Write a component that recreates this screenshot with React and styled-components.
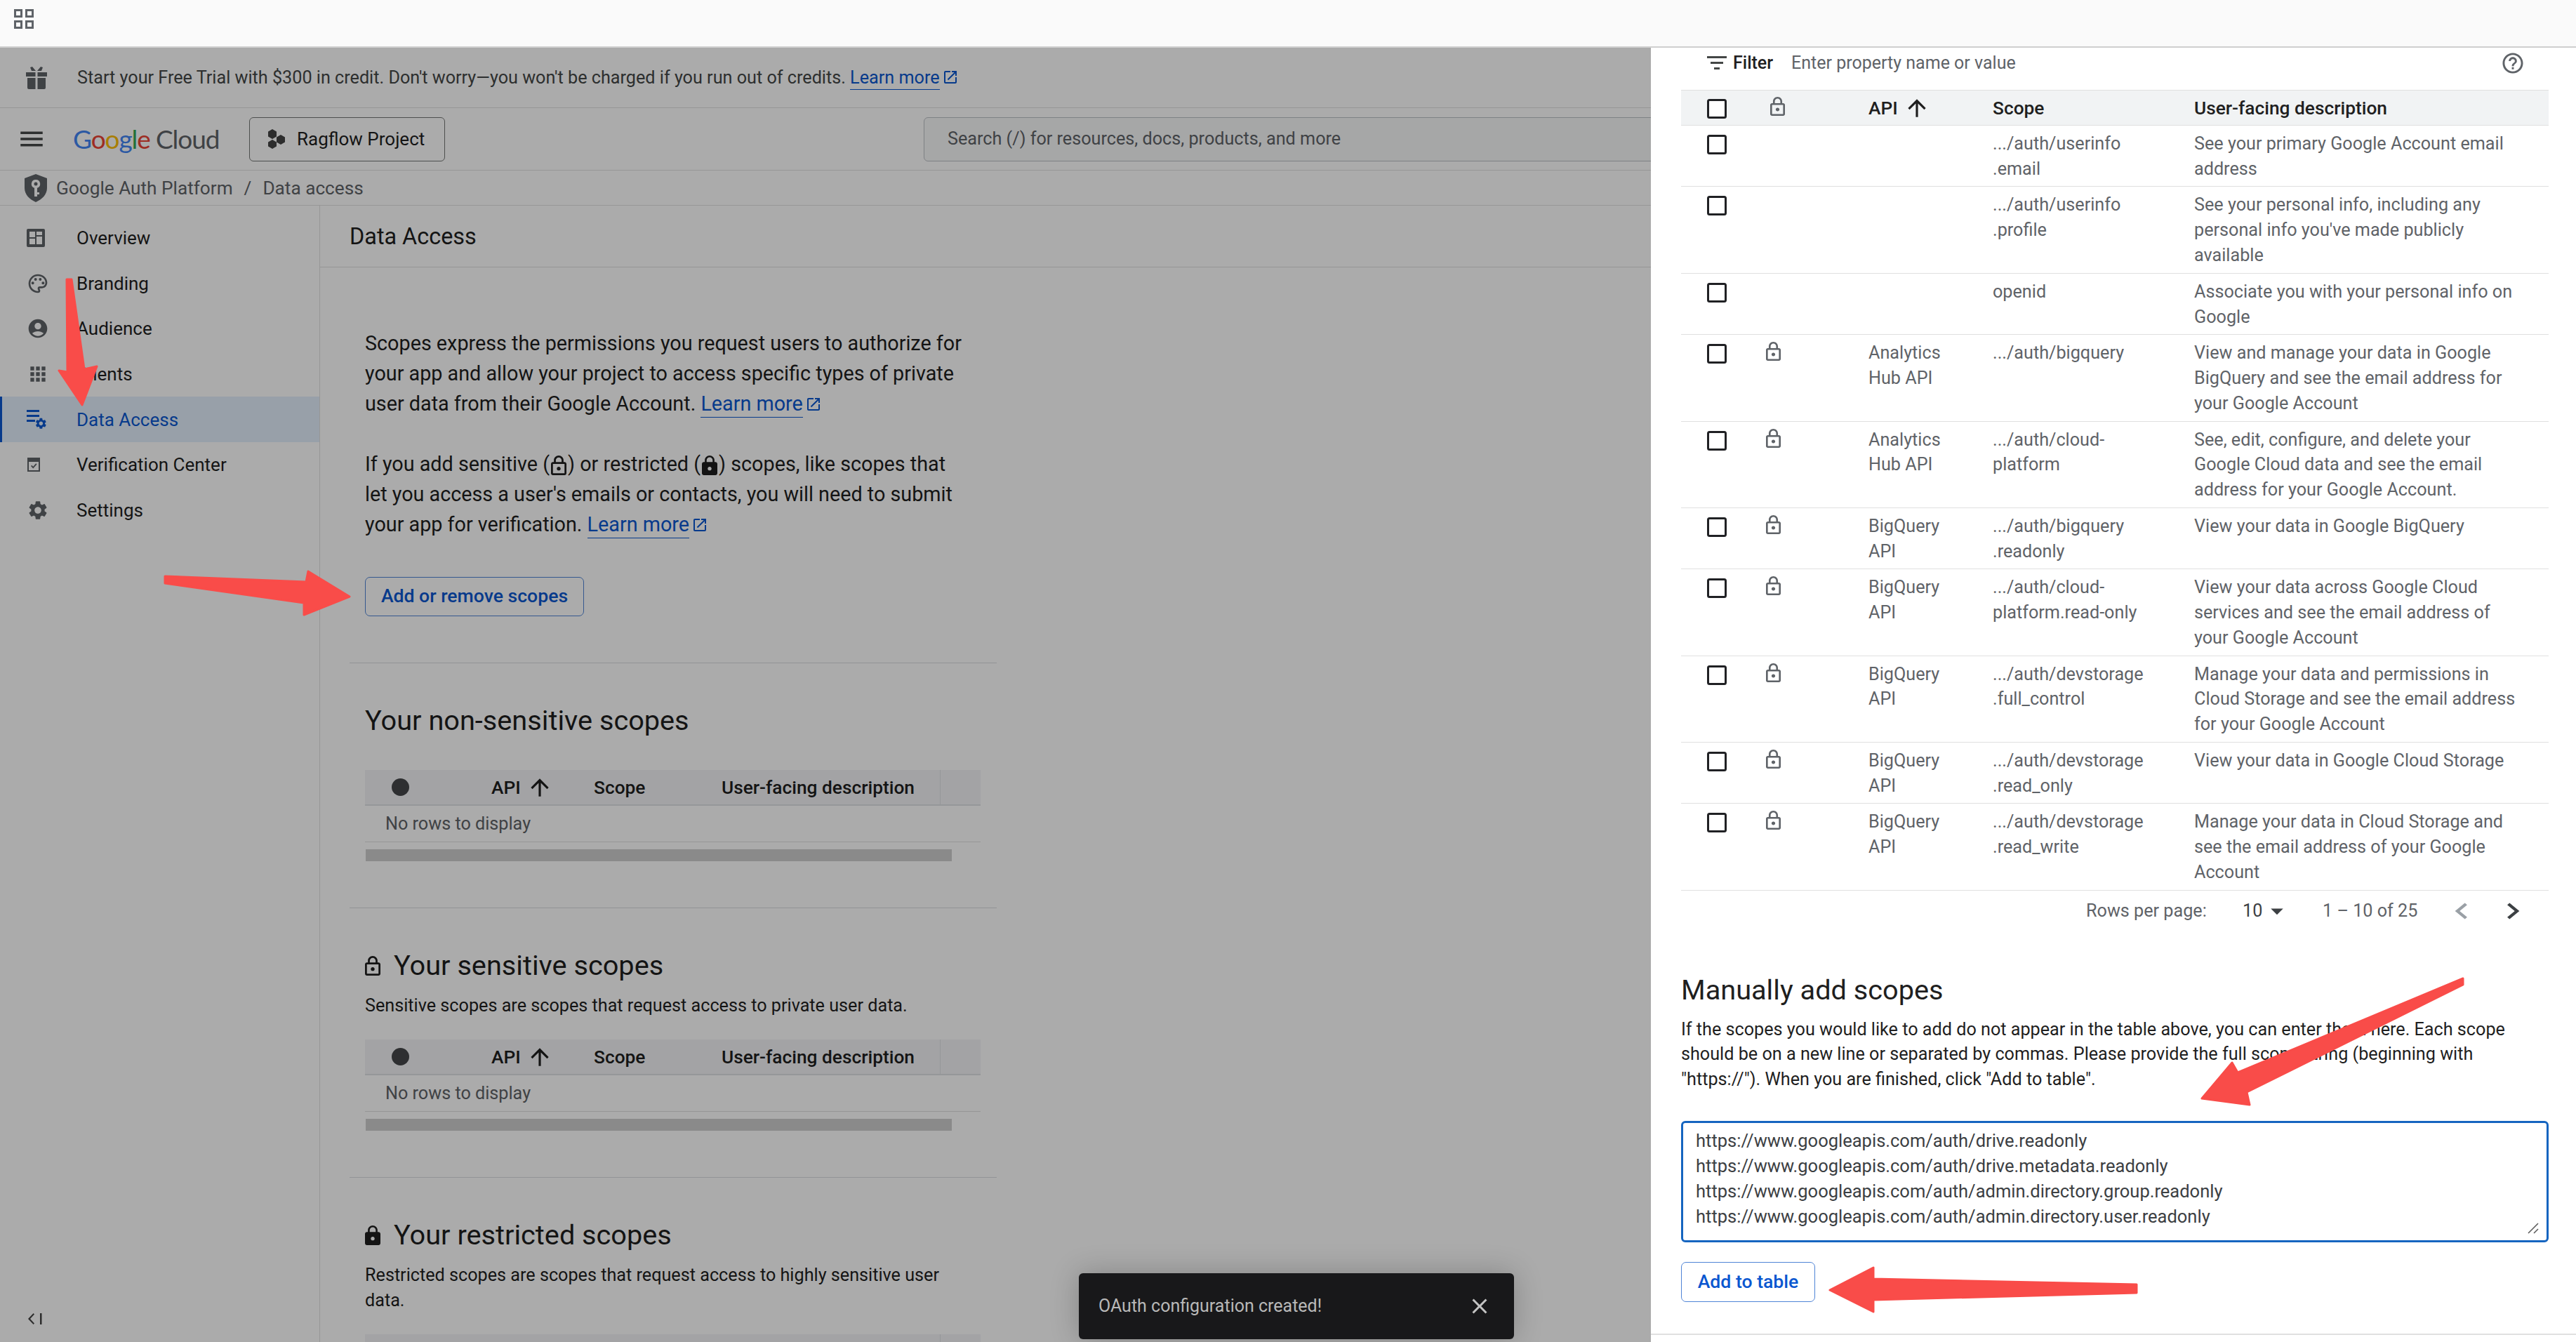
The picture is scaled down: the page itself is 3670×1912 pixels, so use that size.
import React from "react";
import styled, { createGlobalStyle } from "styled-components";

const Global = createGlobalStyle`
  html, body { margin: 0; padding: 0; background: #fff; }
  * { box-sizing: border-box; }
`;

const P = {
  lock: "M18 8h-1V6c0-2.76-2.24-5-5-5S7 3.24 7 6v2H6c-1.1 0-2 .9-2 2v10c0 1.1.9 2 2 2h12c1.1 0 2-.9 2-2V10c0-1.1-.9-2-2-2zM9 6c0-1.66 1.34-3 3-3s3 1.34 3 3v2H9V6zm9 14H6V10h12v10zm-6-3c1.1 0 2-.9 2-2s-.9-2-2-2-2 .9-2 2 .9 2 2 2z",
  lockFill: "M18 8h-1V6c0-2.76-2.24-5-5-5S7 3.24 7 6v2H6c-1.1 0-2 .9-2 2v10c0 1.1.9 2 2 2h12c1.1 0 2-.9 2-2V10c0-1.1-.9-2-2-2zm-6 9c-1.1 0-2-.9-2-2s.9-2 2-2 2 .9 2 2-.9 2-2 2zm3.1-9H8.9V6c0-1.71 1.39-3.1 3.1-3.1 1.71 0 3.1 1.39 3.1 3.1v2z",
  palette: "M12 22C6.49 22 2 17.51 2 12S6.49 2 12 2s10 4.04 10 9c0 3.31-2.69 6-6 6h-1.77c-.28 0-.5.22-.5.5 0 .12.05.23.13.33.41.47.64 1.06.64 1.67A2.5 2.5 0 0 1 12 22zm0-18c-4.41 0-8 3.59-8 8s3.59 8 8 8c.28 0 .5-.22.5-.5a.54.54 0 0 0-.14-.35c-.41-.46-.63-1.05-.63-1.65a2.5 2.5 0 0 1 2.5-2.5H16c2.21 0 4-1.79 4-4 0-3.86-3.59-7-8-7zM6.5 10a1.5 1.5 0 1 0 0 3 1.5 1.5 0 0 0 0-3zm3-4a1.5 1.5 0 1 0 0 3 1.5 1.5 0 0 0 0-3zm5 0a1.5 1.5 0 1 0 0 3 1.5 1.5 0 0 0 0-3zm3 4a1.5 1.5 0 1 0 0 3 1.5 1.5 0 0 0 0-3z",
  account: "M12 2C6.48 2 2 6.48 2 12s4.48 10 10 10 10-4.48 10-10S17.52 2 12 2zm0 4c1.93 0 3.5 1.57 3.5 3.5S13.93 13 12 13s-3.5-1.57-3.5-3.5S10.07 6 12 6zm0 14c-2.03 0-4.43-.82-6.14-2.88C7.55 15.8 9.68 15 12 15s4.45.8 6.14 2.12C16.43 19.18 14.03 20 12 20z",
  apps: "M4 8h4V4H4v4zm6 12h4v-4h-4v4zm-6 0h4v-4H4v4zm0-6h4v-4H4v4zm6 0h4v-4h-4v4zm6-10v4h4V4h-4zm-6 4h4V4h-4v4zm6 6h4v-4h-4v4zm0 6h4v-4h-4v4z",
  gear: "M19.14 12.94c.04-.3.06-.61.06-.94 0-.32-.02-.64-.07-.94l2.03-1.58c.18-.14.23-.41.12-.61l-1.92-3.32c-.12-.22-.37-.29-.59-.22l-2.39.96c-.5-.38-1.03-.7-1.62-.94l-.36-2.54c-.04-.24-.24-.41-.48-.41h-3.84c-.24 0-.43.17-.47.41l-.36 2.54c-.59.24-1.13.57-1.62.94l-2.39-.96c-.22-.08-.47 0-.59.22L2.74 8.87c-.12.21-.08.47.12.61l2.03 1.58c-.05.3-.09.63-.09.94s.02.64.07.94l-2.03 1.58c-.18.14-.23.41-.12.61l1.92 3.32c.12.22.37.29.59.22l2.39-.96c.5.38 1.03.7 1.62.94l.36 2.54c.05.24.24.41.48.41h3.84c.24 0 .44-.17.47-.41l.36-2.54c.59-.24 1.13-.56 1.62-.94l2.39.96c.22.08.47 0 .59-.22l1.92-3.32c.12-.22.07-.47-.12-.61l-2.01-1.58zM12 15.6c-1.98 0-3.6-1.62-3.6-3.6s1.62-3.6 3.6-3.6 3.6 1.62 3.6 3.6-1.62 3.6-3.6 3.6z",
  help: "M11 18h2v-2h-2v2zm1-16C6.48 2 2 6.48 2 12s4.48 10 10 10 10-4.48 10-10S17.52 2 12 2zm0 18c-4.41 0-8-3.59-8-8s3.59-8 8-8 8 3.59 8 8-3.59 8-8 8zm0-14c-2.21 0-4 1.79-4 4h2c0-1.1.9-2 2-2s2 .9 2 2c0 2-3 1.75-3 5h2c0-2.25 3-2.5 3-5 0-2.21-1.79-4-4-4z",
  external: "M19 19H5V5h7V3H5c-1.11 0-2 .9-2 2v14c0 1.1.89 2 2 2h14c1.1 0 2-.9 2-2v-7h-2v7zM14 3v2h3.59l-9.83 9.83 1.41 1.41L19 6.41V10h2V3h-7z",
  up: "M4 12l1.41 1.41L11 7.83V20h2V7.83l5.58 5.59L20 12l-8-8-8 8z",
  close: "M19 6.41L17.59 5 12 10.59 6.41 5 5 6.41 10.59 12 5 17.59 6.41 19 12 13.41 17.59 19 19 17.59 13.41 12z",
  prev: "M15.41 7.41L14 6l-6 6 6 6 1.41-1.41L10.83 12z",
  next: "M10 6L8.59 7.41 13.17 12l-4.58 4.59L10 18l6-6z",
  caret: "M7 10l5 5 5-5z",
  menu: "M3 18h18v-2H3v2zm0-5h18v-2H3v2zm0-7v2h18V6H3z",
};

const Svg = styled.svg`
  flex: none;
  display: block;
  fill: ${(p) => p.$color || "#5f6368"};
  width: ${(p) => p.$w}px;
  height: ${(p) => p.$h || p.$w}px;
`;

const Glyph = ({ d, size, height, color, box = "0 0 24 24", ...rest }) => (
  <Svg viewBox={box} $w={size} $h={height} $color={color} preserveAspectRatio="none" {...rest}>
    <path d={d} />
  </Svg>
);

const Page = styled.div`
  position: relative;
  width: 3670px;
  height: 1912px;
  overflow: hidden;
  display: flex;
  flex-direction: column;
  background: #fff;
  color: #1f1f1f;
  font-family: Roboto, "Liberation Sans", sans-serif;
  font-size: 25.2px;
  line-height: 36px;
`;

const TopBar = styled.header`
  flex: none;
  height: 68px;
  padding: 13px 0 0 20px;
  background: #fafafa;
  border-bottom: 2px solid #cfcfcf;
`;

const Workspace = styled.div`
  position: relative;
  flex: 1;
  min-height: 0;
  overflow: hidden;
`;

const Console = styled.div`
  height: 100%;
  display: flex;
  flex-direction: column;
`;

const Scrim = styled.div`
  position: absolute;
  inset: 0;
  background: rgba(0, 0, 0, 0.33);
  z-index: 1;
`;

const Banner = styled.div`
  flex: none;
  height: 86px;
  display: flex;
  align-items: center;
  padding-left: 37px;
  color: #444746;
  border-bottom: 1px solid #e0e0e0;
  white-space: nowrap;
`;

const BannerText = styled.span`
  margin-left: 43px;
`;

const TextLink = styled.a`
  color: #0b57d0;
  text-decoration: none;
  border-bottom: 1px solid currentColor;
  padding-bottom: 2px;
`;

const LinkIcon = styled(Svg)`
  display: inline-block;
  vertical-align: -3px;
  margin-left: 3px;
  fill: #0b57d0;
`;

const External = () => (
  <LinkIcon viewBox="0 0 24 24" $w={24}>
    <path d={P.external} />
  </LinkIcon>
);

const InlineLock = styled(Svg)`
  display: inline-block;
  vertical-align: -6px;
  margin: 0 2px;
`;

const Nav = styled.div`
  flex: none;
  height: 89px;
  display: flex;
  align-items: center;
  padding-left: 24px;
  border-bottom: 1px solid #e0e0e0;
`;

const Logo = styled.div`
  margin-left: 38px;
  width: 209px;
  font-family: Lato, "Open Sans", sans-serif;
  font-size: 37px;
  letter-spacing: -1.1px;
  line-height: 50px;
  white-space: nowrap;
  color: #5f6368;
`;

const LogoLetter = styled.span`
  color: ${(p) => p.$c};
`;

const ProjectButton = styled.button`
  margin-left: 42px;
  width: 279px;
  height: 63px;
  display: flex;
  align-items: center;
  gap: 17px;
  padding: 0 0 0 26px;
  background: transparent;
  border: 1.5px solid #747775;
  border-radius: 6px;
  color: #1f1f1f;
  font-family: inherit;
  font-size: 26px;
  line-height: 36px;
`;

const SearchBox = styled.div`
  margin-left: 682px;
  flex: none;
  width: 1100px;
  height: 63px;
  display: flex;
  align-items: center;
  padding-left: 33px;
  background: #f8f9fa;
  border: 1.5px solid #bdc1c6;
  border-radius: 6px;
  color: #5f6368;
`;

const Crumbs = styled.div`
  flex: none;
  height: 50px;
  display: flex;
  align-items: center;
  padding-left: 35px;
  color: #5f6368;
  font-size: 26.2px;
  border-bottom: 1px solid #e0e0e0;
`;

const CrumbName = styled.span`
  margin-left: 13px;
`;

const CrumbSlash = styled.span`
  margin: 0 16px;
`;

const Body = styled.div`
  flex: 1;
  min-height: 0;
  display: flex;
  overflow: hidden;
`;

const Sidebar = styled.nav`
  flex: none;
  width: 456px;
  display: flex;
  flex-direction: column;
  padding-top: 14px;
  border-right: 1px solid #e0e0e0;
`;

const NavItem = styled.a`
  flex: none;
  height: 64.6px;
  display: flex;
  align-items: center;
  padding-left: ${(p) => (p.$active ? 35 : 38)}px;
  color: ${(p) => (p.$active ? "#0b57d0" : "#1f1f1f")};
  font-size: 26px;
  background: ${(p) => (p.$active ? "#e3effc" : "transparent")};
  border-left: ${(p) => (p.$active ? "3px solid #0b57d0" : "0")};
`;

const NavIconSlot = styled.span`
  width: 71px;
  display: flex;
  align-items: center;
`;

const Collapse = styled.div`
  margin-top: auto;
  padding: 0 0 25px 40px;
`;

const Main = styled.main`
  flex: 1;
  min-width: 0;
  overflow: hidden;
`;

const MainHeader = styled.h1`
  margin: 0;
  height: 88px;
  display: flex;
  align-items: center;
  padding-left: 42px;
  font-size: 32.4px;
  font-weight: 400;
  border-bottom: 1px solid #e0e0e0;
`;

const Content = styled.div`
  width: 922px;
  margin-left: 42px;
`;

const Section = styled.section`
  padding: ${(p) => p.$top || 60}px 22px 66px;
  border-bottom: 1px solid #dadce0;
`;

const Prose = styled.p`
  margin: 0 0 43px;
  font-size: 28.76px;
  line-height: 43px;
  white-space: nowrap;
`;

const Outline = styled.button`
  display: flex;
  align-items: center;
  justify-content: center;
  width: ${(p) => p.$w}px;
  height: ${(p) => p.$h}px;
  margin-top: ${(p) => p.$mt || 0}px;
  padding: 0 0 3px;
  background: #fff;
  border: 1.5px solid #4f84d6;
  border-radius: 7px;
  color: #0b57d0;
  font-family: Roboto, "Liberation Sans", sans-serif;
  font-size: 26.6px;
  font-weight: 500;
  white-space: nowrap;
`;

const H2 = styled.h2`
  margin: 0;
  display: flex;
  align-items: center;
  gap: 19px;
  font-size: 39.7px;
  line-height: 44px;
  font-weight: 400;
  white-space: nowrap;
`;

const Sub = styled.p`
  margin: 17px 0 0;
  white-space: nowrap;
`;

const EmptyTable = styled.div`
  margin-top: ${(p) => p.$mt}px;
  width: 877px;
`;

const EmptyHead = styled.div`
  height: 51px;
  display: grid;
  grid-template-columns: 180px 146px 182px 312px 1fr;
  align-items: center;
  background: #f3f4f6;
  border-bottom: 2px solid #dfe1e5;
  font-size: 26.3px;
  font-weight: 500;
`;

const EmptyDot = styled.span`
  justify-self: start;
  margin-left: 38px;
  width: 25px;
  height: 25px;
  border-radius: 50%;
  background: #45474a;
`;

const HeadCell = styled.span`
  display: flex;
  align-items: center;
  gap: 8px;
  height: 100%;
  ${(p) => p.$sep && "border-right: 1px solid #dfe1e5;"}
`;

const EmptyRow = styled.div`
  height: 52px;
  display: flex;
  align-items: center;
  padding-left: 29px;
  color: #5f6368;
  border-bottom: 1px solid #e0e0e0;
`;

const ScrollThumb = styled.div`
  margin: 10px 0 0 1px;
  width: 835px;
  height: 17px;
  background: #cecece;
`;

const Drawer = styled.aside`
  position: absolute;
  z-index: 2;
  top: 0;
  right: 0;
  bottom: 0;
  width: 1318px;
  padding: 0 39px 0 43px;
  display: flex;
  flex-direction: column;
  background: #fff;
`;

const FilterRow = styled.div`
  flex: none;
  height: 44px;
  margin-bottom: 16px;
  display: flex;
  align-items: center;
  padding-left: 37px;
`;

const FilterLabel = styled.span`
  margin-left: 9px;
  font-size: 25px;
  font-weight: 500;
`;

const FilterHint = styled.span`
  margin-left: 26px;
  font-size: 25px;
  color: #5f6368;
`;

const HelpSlot = styled.span`
  margin: 0 35px 0 auto;
`;

const Grid = styled.div`
  display: grid;
  grid-template-columns: 121px 146px 177px 287px 1fr;
  padding: 8px 0 6.9px;
`;

const ScopeHead = styled(Grid)`
  height: 51px;
  padding: 0;
  align-items: center;
  background: #f1f3f4;
  border-top: 1.5px solid #e0e0e0;
  border-bottom: 1.5px solid #e0e0e0;
  font-size: 26.3px;
  font-weight: 500;
`;

const ScopeRow = styled(Grid)`
  border-bottom: 1.5px solid #e0e0e0;
  color: #5f6368;
  line-height: 35.8px;
`;

const Check = styled.span`
  display: block;
  width: 28px;
  height: 28px;
  margin: ${(p) => (p.$head ? "2px 0 0 37px" : "5px 0 0 37px")};
  border: 3.5px solid #202124;
  border-radius: 3.5px;
  background: #fff;
`;

const LockSlot = styled.span`
  display: block;
  margin: ${(p) => (p.$head ? "-4px 0 0 6px" : "2px 0 0 0")};
`;

const Line = styled.div`
  white-space: nowrap;
`;

const Pager = styled.div`
  flex: none;
  height: 58px;
  display: grid;
  grid-template-columns: 577px 223px 114px 170px 73px 56px;
  align-items: center;
  color: #5f6368;
`;

const PagerSize = styled.span`
  display: flex;
  align-items: center;
  color: #3c4043;
`;

const H3 = styled(H2)`
  margin-top: 62px;
`;

const ManualText = styled.p`
  margin: 16px 0 0;
  line-height: 35.8px;
  white-space: nowrap;
  color: #1f1f1f;
`;

const InputWrap = styled.div`
  position: relative;
  flex: none;
  width: 1236px;
  margin-top: 41px;
`;

const ScopeInput = styled.textarea`
  display: block;
  width: 100%;
  height: 173px;
  padding: 7px 18px;
  border: 3px solid #1565c0;
  border-radius: 6px;
  outline: none;
  resize: none;
  color: #3c4043;
  font-family: Roboto, "Liberation Sans", sans-serif;
  font-size: 25.5px;
  line-height: 36px;
  white-space: pre;
  overflow: hidden;
`;

const ResizeGrip = styled.svg`
  position: absolute;
  right: 14px;
  bottom: 12px;
  width: 16px;
  height: 16px;
  stroke: #5f5f5f;
  stroke-width: 1.6;
`;

const DrawerFoot = styled.div`
  margin: 45px -39px 0 -43px;
  border-top: 2px solid #e0e0e0;
`;

const Toast = styled.div`
  position: absolute;
  z-index: 3;
  left: 1537px;
  bottom: 4px;
  width: 620px;
  height: 94px;
  display: flex;
  align-items: center;
  justify-content: space-between;
  padding: 0 31px 0 28px;
  background: #18181a;
  border-radius: 6px;
  color: #b8b8b8;
  font-size: 25px;
  box-shadow: 0 0 40px rgba(0, 0, 0, 0.22);
`;

const Annotations = styled.svg`
  position: absolute;
  z-index: 5;
  top: 0;
  left: 0;
  width: 3670px;
  height: 1912px;
  pointer-events: none;
`;

const ArrowPath = styled.path`
  fill: #f94c49;
  stroke: #f94c49;
  stroke-width: 3;
  stroke-linejoin: round;
`;

const Lock = ({ size = 21, height = 27, color = "#5f6368" }) => (
  <Glyph d={P.lock} size={size} height={height} color={color} box="4 1 16 21" />
);

const GridIcon = () => (
  <Svg viewBox="0 0 28 28" $w={28} $color="#5f6368">
    <path fillRule="evenodd" d="M0 0h12v12H0zM3 3v6h6V3zM16 0h12v12H16zM19 3v6h6V3zM0 16h12v12H0zM3 19v6h6v-6zM16 16h12v12H16zM19 19v6h6v-6z" />
  </Svg>
);

const Gift = () => (
  <Svg viewBox="0 0 30 32" $w={30} $h={32} $color="#5f6368">
    <path d="M0 8h13.5v6H0zM16.5 8H30v6H16.5zM2 16h11.5v16H4a2 2 0 0 1-2-2zM16.5 16H28v14a2 2 0 0 1-2 2h-9.5zM6 1l3-1 5 6h-6zM24 1l-3-1-5 6h6z" />
  </Svg>
);

const Hexes = () => (
  <Svg viewBox="0 0 24 28" $w={24} $h={28} $color="#444">
    <path d="M6 0l6 3.5v7L6 14 0 10.500v-7zM18 8l6 3.500v7L18 22l-6-3.500v-7zM6 15l6 3.500v6L6 28 0 24.500v-6z" />
  </Svg>
);

const Shield = () => (
  <Svg viewBox="0 0 32 40" $w={32} $h={40} $color="#5f6368">
    <path fillRule="evenodd" d="M16 0l16 6v14c0 9-7 16-16 20C7 36 0 29 0 20V6zM16 8a6 6 0 0 0-2 11.700V32h4v-3h3v-3h-3v-6.300A6 6 0 0 0 16 8zm0 3.500a2.500 2.500 0 1 1 0 5 2.500 2.500 0 0 1 0-5z" />
  </Svg>
);

const OverviewIcon = () => (
  <Svg viewBox="0 0 26 26" $w={26} $color="#5f6368">
    <path fillRule="evenodd" d="M2 0h22a2 2 0 0 1 2 2v22a2 2 0 0 1-2 2H2a2 2 0 0 1-2-2V2a2 2 0 0 1 2-2zM4 4v8h8V4zM14 4v5h8V4zM14 11v11h8V11zM4 14v8h8v-8z" />
  </Svg>
);

const DataAccessIcon = () => (
  <Svg viewBox="0 0 29 32" $w={29} $h={32} $color="#0b57d0">
    <path d="M0 2h18v3H0zM0 9h18v3H0zM0 16h12v3H0z" />
    <g transform="translate(11 12) scale(.78)">
      <path d={P.gear} />
    </g>
  </Svg>
);

const VerifyIcon = () => (
  <Svg viewBox="0 0 20 20" $w={20} $color="#5f6368">
    <path fillRule="evenodd" d="M1 0h18v20H1zM3 6v12h14V6z" />
    <path d="M6 12l1.200-1.200 2 2 4-4.500L14.500 9.500 9.200 15.400z" />
  </Svg>
);

const CollapseIcon = () => (
  <Svg viewBox="0 0 20 16" $w={20} $h={16} $color="#444">
    <path d="M9 1.500L7.600 0 0 8l7.600 8L9 14.500 3 8zM17 0h2.500v16H17z" />
  </Svg>
);

const FilterIcon = () => (
  <Svg viewBox="0 0 28 20" $w={28} $h={20} $color="#444746">
    <path d="M0 0h28v3H0zM5 8h18v3H5zM10 16h8v3h-8z" />
  </Svg>
);

const Sort = () => <Glyph d={P.up} size={38} color="#1f1f1f" />;

const logoLetters = [
  ["G", "#4285f4"],
  ["o", "#ea4335"],
  ["o", "#fbbc05"],
  ["g", "#4285f4"],
  ["l", "#34a853"],
  ["e", "#ea4335"],
];

const navItems = [
  { label: "Overview", icon: <OverviewIcon /> },
  { label: "Branding", icon: <Glyph d={P.palette} size={32} /> },
  { label: "Audience", icon: <Glyph d={P.account} size={32} /> },
  { label: "Clients", icon: <Glyph d={P.apps} size={32} /> },
  { label: "Data Access", icon: <DataAccessIcon />, active: true },
  { label: "Verification Center", icon: <VerifyIcon /> },
  { label: "Settings", icon: <Glyph d={P.gear} size={32} /> },
];

const rows = [
  { lock: false, api: [], scope: [".../auth/userinfo", ".email"], desc: ["See your primary Google Account email", "address"] },
  { lock: false, api: [], scope: [".../auth/userinfo", ".profile"], desc: ["See your personal info, including any", "personal info you've made publicly", "available"] },
  { lock: false, api: [], scope: ["openid"], desc: ["Associate you with your personal info on", "Google"] },
  { lock: true, api: ["Analytics", "Hub API"], scope: [".../auth/bigquery"], desc: ["View and manage your data in Google", "BigQuery and see the email address for", "your Google Account"] },
  { lock: true, api: ["Analytics", "Hub API"], scope: [".../auth/cloud-", "platform"], desc: ["See, edit, configure, and delete your", "Google Cloud data and see the email", "address for your Google Account."] },
  { lock: true, api: ["BigQuery", "API"], scope: [".../auth/bigquery", ".readonly"], desc: ["View your data in Google BigQuery"] },
  { lock: true, api: ["BigQuery", "API"], scope: [".../auth/cloud-", "platform.read-only"], desc: ["View your data across Google Cloud", "services and see the email address of", "your Google Account"] },
  { lock: true, api: ["BigQuery", "API"], scope: [".../auth/devstorage", ".full_control"], desc: ["Manage your data and permissions in", "Cloud Storage and see the email address", "for your Google Account"] },
  { lock: true, api: ["BigQuery", "API"], scope: [".../auth/devstorage", ".read_only"], desc: ["View your data in Google Cloud Storage"] },
  { lock: true, api: ["BigQuery", "API"], scope: [".../auth/devstorage", ".read_write"], desc: ["Manage your data in Cloud Storage and", "see the email address of your Google", "Account"] },
];

const Lines = ({ items }) => (
  <div>
    {items.map((t) => (
      <Line key={t}>{t}</Line>
    ))}
  </div>
);

const EmptyScopes = ({ mt }) => (
  <EmptyTable $mt={mt}>
    <EmptyHead>
      <EmptyDot />
      <HeadCell>
        API <Sort />
      </HeadCell>
      <HeadCell>Scope</HeadCell>
      <HeadCell $sep>User-facing description</HeadCell>
      <span />
    </EmptyHead>
    <EmptyRow>No rows to display</EmptyRow>
    <ScrollThumb />
  </EmptyTable>
);

const ClippedScopes = ({ mt }) => (
  <EmptyTable $mt={mt}>
    <EmptyHead>
      <span />
      <span />
      <span />
      <HeadCell $sep />
      <span />
    </EmptyHead>
  </EmptyTable>
);

const scopesText =
  "https://www.googleapis.com/auth/drive.readonly\nhttps://www.googleapis.com/auth/drive.metadata.readonly\nhttps://www.googleapis.com/auth/admin.directory.group.readonly\nhttps://www.googleapis.com/auth/admin.directory.user.readonly";

export default function App() {
  return (
    <Page>
      <Global />
      <TopBar>
        <GridIcon />
      </TopBar>
      <Workspace>
        <Console>
          <Banner>
            <Gift />
            <BannerText>
              Start your Free Trial with $300 in credit. Don't worry—you won't be charged if you run out of credits.{" "}
              <TextLink>Learn more</TextLink>
              <External />
            </BannerText>
          </Banner>
          <Nav>
            <Glyph d={P.menu} size={42} height={42} color="#444746" />
            <Logo>
              {logoLetters.map(([l, c], i) => (
                <LogoLetter key={i} $c={c}>
                  {l}
                </LogoLetter>
              ))}{" "}
              Cloud
            </Logo>
            <ProjectButton>
              <Hexes />
              Ragflow Project
            </ProjectButton>
            <SearchBox>Search (/) for resources, docs, products, and more</SearchBox>
          </Nav>
          <Crumbs>
            <Shield />
            <CrumbName>Google Auth Platform</CrumbName>
            <CrumbSlash>/</CrumbSlash>
            <span>Data access</span>
          </Crumbs>
          <Body>
            <Sidebar>
              {navItems.map((n) => (
                <NavItem key={n.label} $active={n.active}>
                  <NavIconSlot>{n.icon}</NavIconSlot>
                  {n.label}
                </NavItem>
              ))}
              <Collapse>
                <CollapseIcon />
              </Collapse>
            </Sidebar>
            <Main>
              <MainHeader>Data Access</MainHeader>
              <Content>
                <Section $top={87}>
                  <Prose>
                    Scopes express the permissions you request users to authorize for
                    <br />
                    your app and allow your project to access specific types of private
                    <br />
                    user data from their Google Account. <TextLink>Learn more</TextLink>
                    <External />
                  </Prose>
                  <Prose>
                    If you add sensitive (
                    <InlineLock viewBox="4 1 16 21" $w={22} $h={28} $color="#1f1f1f" preserveAspectRatio="none">
                      <path d={P.lock} />
                    </InlineLock>
                    ) or restricted (
                    <InlineLock viewBox="4 1 16 21" $w={22} $h={28} $color="#1f1f1f" preserveAspectRatio="none">
                      <path d={P.lockFill} />
                    </InlineLock>
                    ) scopes, like scopes that
                    <br />
                    let you access a user's emails or contacts, you will need to submit
                    <br />
                    your app for verification. <TextLink>Learn more</TextLink>
                    <External />
                  </Prose>
                  <Outline $w={312} $h={56} $mt={53}>
                    Add or remove scopes
                  </Outline>
                </Section>
                <Section>
                  <H2>Your non-sensitive scopes</H2>
                  <EmptyScopes mt={48} />
                </Section>
                <Section>
                  <H2>
                    <Lock size={22} height={28} color="#1f1f1f" />
                    Your sensitive scopes
                  </H2>
                  <Sub>Sensitive scopes are scopes that request access to private user data.</Sub>
                  <EmptyScopes mt={30} />
                </Section>
                <Section>
                  <H2>
                    <Glyph d={P.lockFill} size={22} height={28} color="#1f1f1f" box="4 1 16 21" />
                    Your restricted scopes
                  </H2>
                  <Sub>
                    Restricted scopes are scopes that request access to highly sensitive user
                    <br />
                    data.
                  </Sub>
                  <ClippedScopes mt={30} />
                </Section>
              </Content>
            </Main>
          </Body>
        </Console>
        <Scrim />
        <Drawer>
          <FilterRow>
            <FilterIcon />
            <FilterLabel>Filter</FilterLabel>
            <FilterHint>Enter property name or value</FilterHint>
            <HelpSlot>
              <Glyph d={P.help} size={32} box="1 1 22 22" />
            </HelpSlot>
          </FilterRow>
          <ScopeHead>
            <Check $head />
            <LockSlot $head>
              <Lock />
            </LockSlot>
            <HeadCell>
              API <Sort />
            </HeadCell>
            <HeadCell>Scope</HeadCell>
            <HeadCell>User-facing description</HeadCell>
          </ScopeHead>
          {rows.map((r) => (
            <ScopeRow key={r.scope.join("")}>
              <Check />
              <LockSlot>{r.lock && <Lock />}</LockSlot>
              <Lines items={r.api} />
              <Lines items={r.scope} />
              <Lines items={r.desc} />
            </ScopeRow>
          ))}
          <Pager>
            <span />
            <span>Rows per page:</span>
            <PagerSize>
              10
              <Glyph d={P.caret} size={42} color="#3c4043" />
            </PagerSize>
            <span>1 – 10 of 25</span>
            <Glyph d={P.prev} size={56} height={46} color="#9aa0a6" />
            <Glyph d={P.next} size={56} height={46} color="#3c4043" />
          </Pager>
          <H3>Manually add scopes</H3>
          <ManualText>
            If the scopes you would like to add do not appear in the table above, you can enter them here. Each scope
            <br />
            should be on a new line or separated by commas. Please provide the full scope string (beginning with
            <br />
            "https://"). When you are finished, click "Add to table".
          </ManualText>
          <InputWrap>
            <ScopeInput readOnly defaultValue={scopesText} />
            <ResizeGrip viewBox="0 0 16 16">
              <path d="M1 15L15 1M9 15L15 9" />
            </ResizeGrip>
          </InputWrap>
          <Outline $w={191} $h={57} $mt={28}>
            Add to table
          </Outline>
          <DrawerFoot />
        </Drawer>
        <Toast>
          OAuth configuration created!
          <Glyph d={P.close} size={36} color="#c4c4c4" />
        </Toast>
      </Workspace>
      <Annotations viewBox="0 0 3670 1912">
        <ArrowPath d="M95 398L102 398L120 526L138 522L117 577L84 528L96 530Z" />
        <ArrowPath d="M235 821L436 829L439 814L498 850L433 876L433 859L235 831Z" />
        <ArrowPath d="M3509 1394L3509 1403L3201 1556L3205 1574L3137 1565L3180 1514L3188 1528Z" />
        <ArrowPath d="M3044 1830L3044 1842L2669 1852L2669 1869L2607 1838L2669 1806L2669 1822Z" />
      </Annotations>
    </Page>
  );
}
